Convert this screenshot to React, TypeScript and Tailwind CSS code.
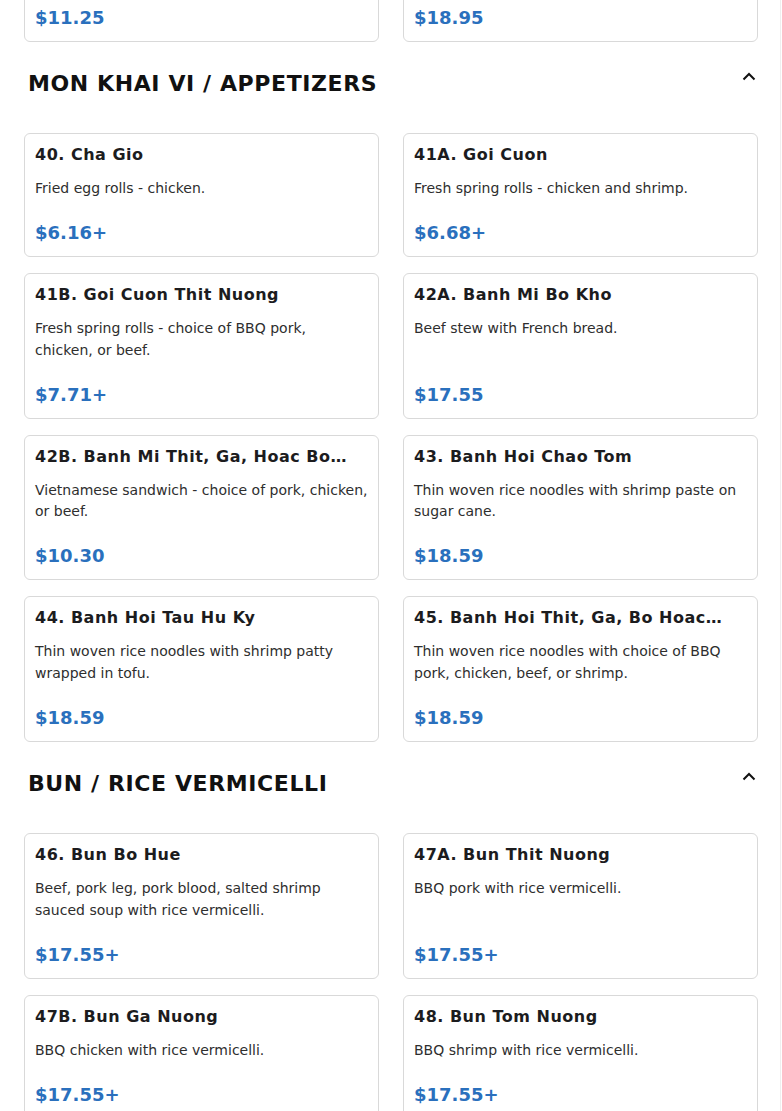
import { Fragment } from 'react';

type Item = { name: string; desc: string; price: string };
type Section = { title: string | null; items: Item[] };

const sections: Section[] = [
  {
    title: null,
    items: [
      { name: '38. Com Suon Nuong', desc: 'Broken rice with BBQ pork chop.', price: '$11.25' },
      { name: '39. Com Tom Rim', desc: 'Broken rice with caramelized shrimp.', price: '$18.95' },
    ],
  },
  {
    title: 'MON KHAI VI / APPETIZERS',
    items: [
      { name: '40. Cha Gio', desc: 'Fried egg rolls - chicken.', price: '$6.16+' },
      { name: '41A. Goi Cuon', desc: 'Fresh spring rolls - chicken and shrimp.', price: '$6.68+' },
      {
        name: '41B. Goi Cuon Thit Nuong',
        desc: 'Fresh spring rolls - choice of BBQ pork, chicken, or beef.',
        price: '$7.71+',
      },
      { name: '42A. Banh Mi Bo Kho', desc: 'Beef stew with French bread.', price: '$17.55' },
      {
        name: '42B. Banh Mi Thit, Ga, Hoac Bo Nuong',
        desc: 'Vietnamese sandwich - choice of pork, chicken, or beef.',
        price: '$10.30',
      },
      {
        name: '43. Banh Hoi Chao Tom',
        desc: 'Thin woven rice noodles with shrimp paste on sugar cane.',
        price: '$18.59',
      },
      {
        name: '44. Banh Hoi Tau Hu Ky',
        desc: 'Thin woven rice noodles with shrimp patty wrapped in tofu.',
        price: '$18.59',
      },
      {
        name: '45. Banh Hoi Thit, Ga, Bo Hoac Tom',
        desc: 'Thin woven rice noodles with choice of BBQ pork, chicken, beef, or shrimp.',
        price: '$18.59',
      },
    ],
  },
  {
    title: 'BUN / RICE VERMICELLI',
    items: [
      {
        name: '46. Bun Bo Hue',
        desc: 'Beef, pork leg, pork blood, salted shrimp sauced soup with rice vermicelli.',
        price: '$17.55+',
      },
      { name: '47A. Bun Thit Nuong', desc: 'BBQ pork with rice vermicelli.', price: '$17.55+' },
      { name: '47B. Bun Ga Nuong', desc: 'BBQ chicken with rice vermicelli.', price: '$17.55+' },
      { name: '48. Bun Tom Nuong', desc: 'BBQ shrimp with rice vermicelli.', price: '$17.55+' },
    ],
  },
];

function MenuCard({ item }: { item: Item }) {
  return (
    <div className="flex flex-col border border-[#d9d9d9] rounded-md bg-white p-2.5">
      <div className="line-clamp-1 text-base leading-[22px] font-bold tracking-[0.5px] text-[#1c1c1e]">
        {item.name}
      </div>
      <p className="mt-3 mb-[19.5px] text-sm leading-[21.5px] text-[#2e2e2e]">{item.desc}</p>
      <div className="mt-auto text-lg leading-[27px] font-bold text-[#2a70bd]">{item.price}</div>
    </div>
  );
}

export default function App() {
  return (
    <div className="flex bg-white font-['DejaVu_Sans',sans-serif] overflow-hidden h-[1111px]">
      <main className="w-[780px] pl-6 pr-[22px] -mt-[82.5px]">
        {sections.map((section, i) => (
          <Fragment key={i}>
            {section.title && (
              <div className="flex items-start justify-between pl-1 pr-[2px] pt-[25px] pb-[33.5px]">
                <h2 className="text-[22px] leading-[33px] font-bold tracking-[0.6px] text-[#111]">
                  {section.title}
                </h2>
                <svg width="14" height="9" viewBox="0 0 14 9" className="mt-[5px] text-[#111]">
                  <path d="M1.5 7.5 7 2l5.5 5.5" stroke="currentColor" strokeWidth="2" fill="none" />
                </svg>
              </div>
            )}
            <div className="grid grid-cols-2 gap-x-6 gap-y-4">
              {section.items.map((item) => (
                <MenuCard key={item.name} item={item} />
              ))}
            </div>
          </Fragment>
        ))}
      </main>
      <div className="w-px bg-[#efefef]" />
    </div>
  );
}
